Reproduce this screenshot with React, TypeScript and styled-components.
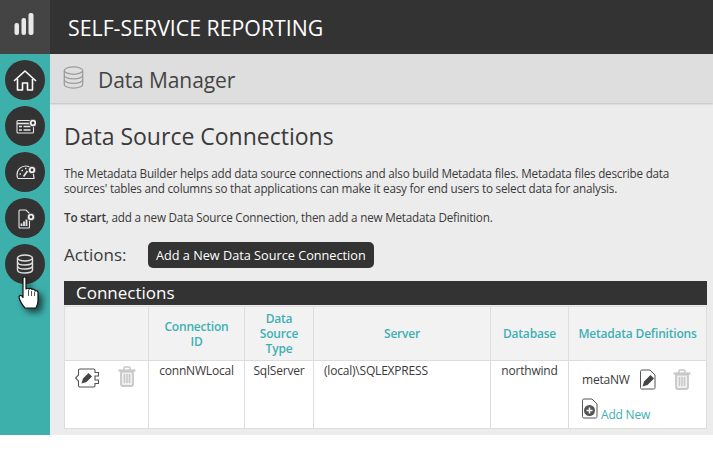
import React from 'react';
import styled, { createGlobalStyle } from 'styled-components';

const GlobalStyle = createGlobalStyle`
  html, body {
    margin: 0;
    padding: 0;
    background: #fff;
    font-family: "Open Sans", "Liberation Sans", sans-serif;
  }
`;

const Page = styled.div`
  width: 713px;
  height: 457px;
  overflow: hidden;
  background: #fff;
`;

const Header = styled.header`
  display: flex;
  align-items: center;
  height: 54px;
  background: #333333;
`;

const LogoBox = styled.div`
  display: flex;
  align-items: center;
  justify-content: center;
  width: 50px;
  height: 54px;
  padding: 0 3px 4px 0;
  box-sizing: border-box;
  background: #444444;
`;

const AppTitle = styled.h1`
  margin: 0 0 0 18px;
  font-size: 21.3px;
  font-weight: 400;
  color: #fff;
`;

const Body = styled.div`
  display: flex;
  height: 381px;
`;

const Sidebar = styled.nav`
  position: relative;
  display: flex;
  flex-direction: column;
  align-items: center;
  gap: 6px;
  width: 50px;
  padding-top: 6px;
  box-sizing: border-box;
  background: #3eb0ac;
`;

const NavButton = styled.div`
  display: flex;
  align-items: center;
  justify-content: center;
  width: 40px;
  height: 40px;
  border-radius: 50%;
  background: #333333;
`;

const Pointer = styled.svg`
  position: absolute;
  left: 18px;
  top: 222px;
  filter: drop-shadow(4px 4px 3px rgba(0, 0, 0, 0.6));
`;

const Main = styled.main`
  flex: 1;
  min-width: 0;
  background: #ececec;
`;

const SubHeader = styled.div`
  display: flex;
  align-items: center;
  height: 49px;
  padding-left: 13px;
  box-sizing: border-box;
  background: #dedede;
  box-shadow: 0 1px 2px rgba(0, 0, 0, 0.2);
`;

const DbIcon = styled.svg`
  margin-bottom: 3px;
`;

const SubTitle = styled.h2`
  margin: 0 0 0 14px;
  padding-top: 3px;
  font-size: 21px;
  font-weight: 400;
  color: #444444;
  letter-spacing: -0.1px;
`;

const Content = styled.div`
  padding: 18px 6px 0 14px;
`;

const PageTitle = styled.h3`
  margin: 0;
  font-size: 23px;
  line-height: 30px;
  font-weight: 400;
  color: #3a3a3a;
`;

const Paragraph = styled.p`
  margin: 0 0 14px;
  font-size: 11.7px;
  line-height: 15px;
  color: #3a3a3a;
  letter-spacing: -0.21px;
  white-space: pre-line;

  b {
    font-weight: 600;
  }
`;

const Intro = styled.div`
  margin-top: 15px;
`;

const ActionsRow = styled.div`
  display: flex;
  align-items: center;
  margin-top: 17px;
`;

const ActionsLabel = styled.span`
  width: 84px;
  padding-bottom: 2px;
  font-size: 17px;
  color: #3a3a3a;
`;

const ActionButton = styled.button`
  height: 26px;
  padding: 0 8px;
  border: none;
  border-radius: 5px;
  background: #333333;
  color: #fff;
  font-family: inherit;
  font-size: 12.7px;
`;

const SectionBar = styled.div`
  height: 24px;
  margin-top: 13px;
  padding-left: 12px;
  background: #333333;
  color: #fff;
  font-size: 17px;
  line-height: 24px;
`;

const Table = styled.table`
  width: 642px;
  table-layout: fixed;
  border-collapse: collapse;
  background: #fff;
  margin-top: 1px;
`;

const HeadCell = styled.th<{ $w: number }>`
  box-sizing: border-box;
  width: ${(p) => p.$w}px;
  height: 54px;
  padding: 0;
  border: 1px solid #dddddd;
  background: #f2f2f2;
  color: #3eb0b4;
  font-size: 12px;
  line-height: 15px;
  font-weight: 600;
  letter-spacing: -0.2px;
`;

const Cell = styled.td`
  box-sizing: border-box;
  height: 68px;
  padding: 2px 0 0;
  border: 1px solid #dddddd;
  vertical-align: top;
  text-align: center;
  font-size: 12px;
  line-height: 16px;
  color: #3a3a3a;
  letter-spacing: -0.2px;
`;

const ServerCell = styled(Cell)`
  text-align: left;
  padding-left: 10px;
`;

const IconCell = styled(Cell)`
  padding: 5px 0 0 10px;
`;

const MetaCell = styled(Cell)`
  text-align: left;
`;

const IconRow = styled.div`
  display: flex;
  align-items: flex-start;
`;

const ConnIcon = styled.svg`
  margin-top: 2px;
`;

const MetaRow = styled.div`
  display: flex;
  align-items: center;
  padding: 6px 0 0 13px;
`;

const MetaName = styled.span`
  margin-right: 10px;
`;

const AddRow = styled.div`
  display: flex;
  align-items: flex-end;
  padding: 8px 0 0 13px;
`;

const AddLink = styled.a`
  margin: 0 0 -3px 3px;
  color: #3eb0b4;
  line-height: 14px;
`;

const TrashIcon = styled.svg<{ $gap: number }>`
  margin-left: ${(p) => p.$gap}px;
`;

const Trash = ({ gap }: { gap: number }) => (
  <TrashIcon $gap={gap} width="18" height="21" viewBox="0 0 18 21" fill="none" stroke="#c8c8c8">
    <path d="M.5 4.5h17" strokeWidth="2.2" />
    <path d="M6 4V2c0-.6.4-1 1-1h4c.6 0 1 .4 1 1v2" strokeWidth="1.5" />
    <path d="M3 5.500V18c0 1 .6 2 2 2h8c1.400 0 2-1 2-2V5.500z" strokeWidth="1.800" fill="#eeeeee" />
    <path d="M6.500 8v9M9 8v9M11.500 8v9" strokeWidth="1.500" />
  </TrashIcon>
);

const Gear = ({ cx, cy }: { cx: number; cy: number }) => (
  <>
    <circle cx={cx} cy={cy} r="3.800" fill="#f4f4f4" stroke="#333" strokeWidth="0.8" />
    <circle cx={cx} cy={cy} r="1.400" fill="#333" stroke="none" />
  </>
);

const App: React.FC = () => (
  <Page>
    <GlobalStyle />
    <Header>
      <LogoBox>
        <svg width="20" height="24" viewBox="0 0 20 24">
          <rect x="0.500" y="10" width="4.500" height="12" rx="2" fill="#e8e8e8" />
          <rect x="7.500" y="5" width="4.500" height="17" rx="2" fill="#e8e8e8" />
          <rect x="14.500" y="0" width="5" height="22" rx="2" fill="#e8e8e8" />
        </svg>
      </LogoBox>
      <AppTitle>SELF-SERVICE REPORTING</AppTitle>
    </Header>
    <Body>
      <Sidebar>
        <NavButton>
          <svg width="24" height="21" viewBox="0 0 24 21" fill="none" stroke="#fff" strokeWidth="1.600" strokeLinejoin="round">
            <path d="M1 11 12 1l11 10" />
            <path d="M4.500 9v11h5v-7h5v7h5V9" />
          </svg>
        </NavButton>
        <NavButton>
          <svg width="22" height="18" viewBox="0 0 22 18" fill="none" stroke="#e8e8e8" strokeWidth="1.100">
            <rect x="3" y="3.500" width="16.500" height="12.500" rx="1" />
            <path d="M3 6.500h16" strokeWidth="1.600" />
            <path d="M5 9.500h3M9.500 9.500h7M5 13h3M9.500 13h7" strokeWidth="1.300" />
            <Gear cx={19} cy={6} />
          </svg>
        </NavButton>
        <NavButton>
          <svg width="22" height="16" viewBox="0 0 22 16" fill="none" stroke="#e8e8e8" strokeWidth="1.200">
            <path d="M4 14.500h16l-.6-5M4 14.500C3 13 3 11.500 3 10.500 3 5.500 7 2 12 2c1.500 0 2.500.3 3.500.8" />
            <path d="M9.500 12.500l4-5.500" strokeWidth="1.700" />
            <path d="M5.500 10h1.500M7.500 6.500h1.500M11 4.500h1.500" strokeWidth="1.400" />
            <Gear cx={18} cy={6} />
          </svg>
        </NavButton>
        <NavButton>
          <svg width="20" height="22" viewBox="0 0 20 22" fill="none" stroke="#e8e8e8" strokeWidth="1.100">
            <path d="M5 3h6l3.500 3.500V20a1 1 0 0 1-1 1H5a1 1 0 0 1-1-1V4a1 1 0 0 1 1-1z" />
            <path d="M6.500 19v-2.500M9 19v-4.500M11.500 19v-6.500" strokeWidth="1.800" />
            <Gear cx={16} cy={10} />
          </svg>
        </NavButton>
        <NavButton>
          <svg width="18" height="20" viewBox="0 0 18 20" fill="none" stroke="#e0e0e0" strokeWidth="1.400">
            <ellipse cx="9" cy="4" rx="7.500" ry="3" />
            <path d="M1.500 4v12c0 1.700 3.400 3 7.500 3s7.500-1.300 7.500-3V4" />
            <path d="M1.500 8c0 1.700 3.400 3 7.500 3s7.500-1.300 7.500-3M1.500 12c0 1.700 3.400 3 7.500 3s7.500-1.300 7.500-3" />
          </svg>
        </NavButton>
        <Pointer width="24" height="38" viewBox="0 0 24 38">
          <path
            d="M5 2c0-1.600 3-1.600 3 0v11c1-1 2.500-1 3 0 1-1 2.500-1 3 .5 1-.8 3-.5 3 1.500 1-.5 3-.2 3 1.500V25c0 3-1 5-2 7H7c-2-2-6-8-6-11 0-1.500 1.500-2 3-1l1 1.500z"
            fill="#fff"
            stroke="#111"
            strokeWidth="1.200"
            strokeLinejoin="round"
          />
          <path d="M10.500 14v6M13.500 15v5M16.500 16v4" stroke="#444" strokeWidth="0.900" />
        </Pointer>
      </Sidebar>
      <Main>
        <SubHeader>
          <DbIcon width="21" height="23" viewBox="0 0 22 25" fill="none" stroke="#9c9c9c" strokeWidth="1.400">
            <ellipse cx="11" cy="5" rx="10" ry="4" />
            <path d="M1 5v15c0 2.200 4.500 4 10 4s10-1.800 10-4V5" />
            <path d="M1 10c0 2.200 4.500 4 10 4s10-1.800 10-4M1 15c0 2.200 4.500 4 10 4s10-1.800 10-4" />
          </DbIcon>
          <SubTitle>Data Manager</SubTitle>
        </SubHeader>
        <Content>
          <PageTitle>Data Source Connections</PageTitle>
          <Intro>
            <Paragraph>
              {"The Metadata Builder helps add data source connections and also build Metadata files. Metadata files describe data\nsources' tables and columns so that applications can make it easy for end users to select data for analysis."}
            </Paragraph>
            <Paragraph>
              <b>To start</b>, add a new Data Source Connection, then add a new Metadata Definition.
            </Paragraph>
          </Intro>
          <ActionsRow>
            <ActionsLabel>Actions:</ActionsLabel>
            <ActionButton>Add a New Data Source Connection</ActionButton>
          </ActionsRow>
          <SectionBar>Connections</SectionBar>
          <Table>
            <thead>
              <tr>
                <HeadCell $w={84} />
                <HeadCell $w={96}>Connection<br />ID</HeadCell>
                <HeadCell $w={69}>Data<br />Source<br />Type</HeadCell>
                <HeadCell $w={177}>Server</HeadCell>
                <HeadCell $w={78}>Database</HeadCell>
                <HeadCell $w={138}>Metadata Definitions</HeadCell>
              </tr>
            </thead>
            <tbody>
              <tr>
                <IconCell>
                  <IconRow>
                    <ConnIcon width="24" height="20" viewBox="0 0 24 20" fill="none">
                      <path d="M5 1h13.500c1 0 1.500.5 1.500 1.500v2h3.500V8H20v4h3.500v3.500H20v2c0 1-.5 1.500-1.500 1.500H5c-1 0-1.500-.5-1.500-1.500V13L.5 10l3-3V2.500C3.500 1.500 4 1 5 1z" stroke="#555" strokeWidth="1.100" fill="#fff" />
                      <path d="M6.500 15.500 8 10.500l5.500-5.500 3.500 3.500-5.500 5.500z" fill="#444" />
                    </ConnIcon>
                    <Trash gap={19} />
                  </IconRow>
                </IconCell>
                <Cell>connNWLocal</Cell>
                <Cell>SqlServer</Cell>
                <ServerCell>(local)\SQLEXPRESS</ServerCell>
                <Cell>northwind</Cell>
                <MetaCell>
                  <MetaRow>
                    <MetaName>metaNW</MetaName>
                    <svg width="16" height="21" viewBox="0 0 16 21" fill="none">
                      <path d="M2 1h8l5 5v12.500c0 1-.5 1.500-1.500 1.500H2c-1 0-1.500-.5-1.500-1.500v-16C.5 1.500 1 1 2 1z" stroke="#555" fill="#fff" />
                      <path d="M2.500 17.500 4 12.500 10.500 6 14 9.500 7.500 16z" fill="#444" />
                    </svg>
                    <Trash gap={17} />
                  </MetaRow>
                  <AddRow>
                    <svg width="16" height="21" viewBox="0 0 16 21" fill="none">
                      <path d="M2 1h8l5 5v12.500c0 1-.5 1.500-1.500 1.500H2c-1 0-1.500-.5-1.500-1.500v-16C.5 1.500 1 1 2 1z" stroke="#555" fill="#fff" />
                      <circle cx="7.500" cy="12.500" r="5.500" fill="#555" />
                      <path d="M7.500 9.500v6M4.500 12.500h6" stroke="#fff" strokeWidth="1.500" />
                    </svg>
                    <AddLink>Add New</AddLink>
                  </AddRow>
                </MetaCell>
              </tr>
            </tbody>
          </Table>
        </Content>
      </Main>
    </Body>
  </Page>
);

export default App;
